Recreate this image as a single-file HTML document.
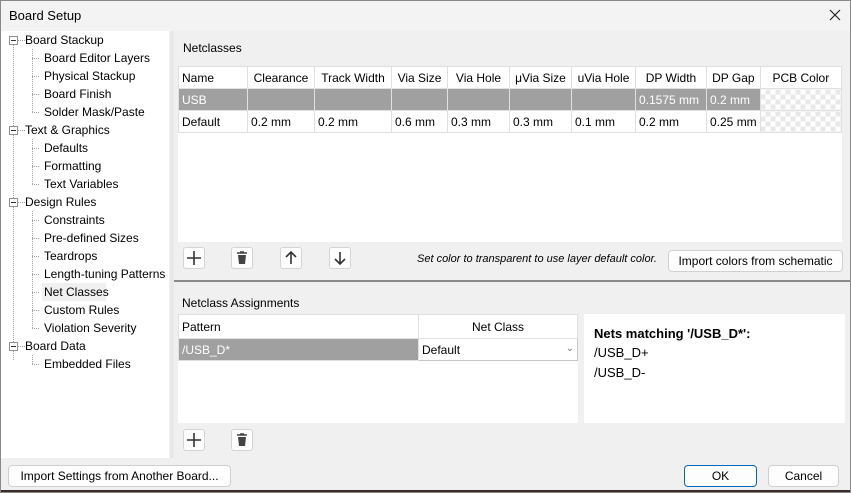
<!DOCTYPE html>
<html><head><style>
*{box-sizing:border-box;margin:0;padding:0}
body{width:851px;height:493px;background:#f0f0f0;font-family:"Liberation Sans",sans-serif;font-size:12px;color:#000;position:relative;overflow:hidden}
.a{position:absolute;white-space:nowrap}
.title{left:0;top:0;width:851px;height:31px;background:#f3f3f3;}
.tree{left:1px;top:31px;width:168px;height:427px;background:#fff}
.ti{position:absolute;font-size:12px;line-height:18px}
.box{position:absolute;width:9px;height:9px;border:1px solid #919191;background:#fff}
.box:after{content:"";position:absolute;left:1px;top:3px;width:5px;height:1px;background:#333}
.vl{position:absolute;border-left:1px dotted #a0a0a0}
.hl{position:absolute;border-top:1px dotted #a0a0a0;width:7px}
table{border-collapse:collapse;font-size:12px}
td{border:1px solid #e0e0e0;padding:0 3px;height:22px;white-space:nowrap}
.btn{position:absolute;background:#fdfdfd;border:1px solid #d0d0d0;border-radius:4px;text-align:center;font-size:12px}
.ib{position:absolute;width:22px;height:22px;background:#fdfdfd;border:1px solid #d4d4d4;border-radius:3px}
</style></head><body>
<div class="a title"><div class="a" style="left:9px;top:8px;font-size:13px">Board Setup</div>
<svg class="a" style="left:829px;top:9px" width="12" height="12"><path d="M1 1L11 11M11 1L1 11" stroke="#222" stroke-width="1.2"/></svg></div>
<div class="a tree">
<div class="vl" style="left:12px;top:14px;height:315px"></div>
<div class="vl" style="left:31px;top:18px;height:63px"></div>
<div class="vl" style="left:31px;top:108px;height:45px"></div>
<div class="vl" style="left:31px;top:180px;height:117px"></div>
<div class="vl" style="left:31px;top:324px;height:9px"></div>
</div>
<div id="tr"></div>
<div class="a" style="left:170px;top:31px;width:4px;height:427px;background:#e8e8e8"></div>
<div class="a" style="left:183px;top:41px">Netclasses</div>
<div class="a" style="left:178px;top:66px;width:664px;height:176px;background:#fff"></div>
<table class="a" style="left:178px;top:66px;width:664px">
<tr style="background:#fff"><td style="width:69px">Name</td><td style="width:67px;text-align:center">Clearance</td><td style="width:77px;text-align:center">Track Width</td><td style="width:56px;text-align:center">Via Size</td><td style="width:62px;text-align:center">Via Hole</td><td style="width:62px;text-align:center">μVia Size</td><td style="width:64px;text-align:center">uVia Hole</td><td style="width:71px;text-align:center">DP Width</td><td style="width:53px;text-align:center">DP Gap</td><td style="text-align:center">PCB Color</td></tr>
<tr style="background:#a0a0a0;color:#fff"><td>USB</td><td></td><td></td><td></td><td></td><td></td><td></td><td>0.1575 mm</td><td>0.2 mm</td><td style="background:repeating-conic-gradient(#e8e8e8 0 25%,#fff 0 50%) 0 0/10px 10px"></td></tr>
<tr><td>Default</td><td>0.2 mm</td><td>0.2 mm</td><td>0.6 mm</td><td>0.3 mm</td><td>0.3 mm</td><td>0.1 mm</td><td>0.2 mm</td><td>0.25 mm</td><td style="background:repeating-conic-gradient(#e8e8e8 0 25%,#fff 0 50%) 0 0/10px 10px"></td></tr>
</table>
<div class="ib" style="left:183px;top:247px"><svg width="20" height="20"><path d="M10 3V17M3 10H17" stroke="#333" stroke-width="1.6"/></svg></div>
<div class="ib" style="left:231px;top:247px"><svg width="20" height="20"><path d="M5 5H15M8 4H12" stroke="#444" stroke-width="1.6"/><path d="M6 7H14L13 16H7Z" fill="#444"/></svg></div>
<div class="ib" style="left:280px;top:247px"><svg width="20" height="20"><path d="M10 4V16M5 9L10 4L15 9" stroke="#333" stroke-width="1.6" fill="none"/></svg></div>
<div class="ib" style="left:329px;top:247px"><svg width="20" height="20"><path d="M10 4V16M5 11L10 16L15 11" stroke="#333" stroke-width="1.6" fill="none"/></svg></div>
<div class="a" style="left:417px;top:253px;font-style:italic;font-size:11px">Set color to transparent to use layer default color.</div>
<div class="btn" style="left:668px;top:250px;width:175px;height:22px;line-height:20px">Import colors from schematic</div>
<div class="a" style="left:174px;top:280px;width:677px;height:2px;background:#8a8a8a"></div>
<div class="a" style="left:182px;top:296px">Netclass Assignments</div>
<div class="a" style="left:178px;top:314px;width:400px;height:109px;background:#fff"></div>
<table class="a" style="left:178px;top:314px;width:400px">
<tr><td style="width:240px;height:24px">Pattern</td><td style="text-align:center">Net Class</td></tr>
<tr><td style="background:#a0a0a0;color:#fff">/USB_D*</td><td style="border:1px solid #c8c8c8">Default<span style="float:right;color:#777;font-size:10px">&#8964;</span></td></tr>
</table>
<div class="a" style="left:584px;top:314px;width:261px;height:109px;background:#fff"></div>
<div class="a" style="left:594px;top:326px;font-weight:bold;font-size:13px">Nets matching '/USB_D*':</div>
<div class="a" style="left:594px;top:345px;font-size:13px">/USB_D+</div>
<div class="a" style="left:594px;top:365px;font-size:13px">/USB_D-</div>
<div class="ib" style="left:183px;top:429px"><svg width="20" height="20"><path d="M10 3V17M3 10H17" stroke="#333" stroke-width="1.6"/></svg></div>
<div class="ib" style="left:231px;top:429px"><svg width="20" height="20"><path d="M5 5H15M8 4H12" stroke="#444" stroke-width="1.6"/><path d="M6 7H14L13 16H7Z" fill="#444"/></svg></div>
<div class="btn" style="left:8px;top:465px;width:223px;height:22px;line-height:20px">Import Settings from Another Board...</div>
<div class="btn" style="left:684px;top:465px;width:73px;height:22px;line-height:20px;border:1px solid #0067c0">OK</div>
<div class="btn" style="left:768px;top:465px;width:71px;height:22px;line-height:20px">Cancel</div>
<div class="a" style="left:0;top:490px;width:851px;height:3px;background:#3a2a2a"></div>
<div class="a" style="left:0;top:0;width:851px;height:493px;border:1px solid #888;pointer-events:none"></div>
<div class="a" style="left:0;top:31px">
<div class="box" style="left:9px;top:5px"></div><div class="hl" style="left:18px;top:9px"></div><div class="ti" style="left:25px;top:0">Board Stackup</div>
<div class="hl" style="left:32px;top:27px"></div><div class="ti" style="left:44px;top:18px">Board Editor Layers</div>
<div class="hl" style="left:32px;top:45px"></div><div class="ti" style="left:44px;top:36px">Physical Stackup</div>
<div class="hl" style="left:32px;top:63px"></div><div class="ti" style="left:44px;top:54px">Board Finish</div>
<div class="hl" style="left:32px;top:81px"></div><div class="ti" style="left:44px;top:72px">Solder Mask/Paste</div>
<div class="box" style="left:9px;top:95px"></div><div class="hl" style="left:18px;top:99px"></div><div class="ti" style="left:25px;top:90px">Text &amp; Graphics</div>
<div class="hl" style="left:32px;top:117px"></div><div class="ti" style="left:44px;top:108px">Defaults</div>
<div class="hl" style="left:32px;top:135px"></div><div class="ti" style="left:44px;top:126px">Formatting</div>
<div class="hl" style="left:32px;top:153px"></div><div class="ti" style="left:44px;top:144px">Text Variables</div>
<div class="box" style="left:9px;top:167px"></div><div class="hl" style="left:18px;top:171px"></div><div class="ti" style="left:25px;top:162px">Design Rules</div>
<div class="hl" style="left:32px;top:189px"></div><div class="ti" style="left:44px;top:180px">Constraints</div>
<div class="hl" style="left:32px;top:207px"></div><div class="ti" style="left:44px;top:198px">Pre-defined Sizes</div>
<div class="hl" style="left:32px;top:225px"></div><div class="ti" style="left:44px;top:216px">Teardrops</div>
<div class="hl" style="left:32px;top:243px"></div><div class="ti" style="left:44px;top:234px">Length-tuning Patterns</div>
<div class="hl" style="left:32px;top:261px"></div><div class="ti" style="left:42px;top:252px;background:#f0f0f0;padding:0 2px;width:64px">Net Classes</div>
<div class="hl" style="left:32px;top:279px"></div><div class="ti" style="left:44px;top:270px">Custom Rules</div>
<div class="hl" style="left:32px;top:297px"></div><div class="ti" style="left:44px;top:288px">Violation Severity</div>
<div class="box" style="left:9px;top:311px"></div><div class="hl" style="left:18px;top:315px"></div><div class="ti" style="left:25px;top:306px">Board Data</div>
<div class="hl" style="left:32px;top:333px"></div><div class="ti" style="left:44px;top:324px">Embedded Files</div>
</div>
</body></html>
